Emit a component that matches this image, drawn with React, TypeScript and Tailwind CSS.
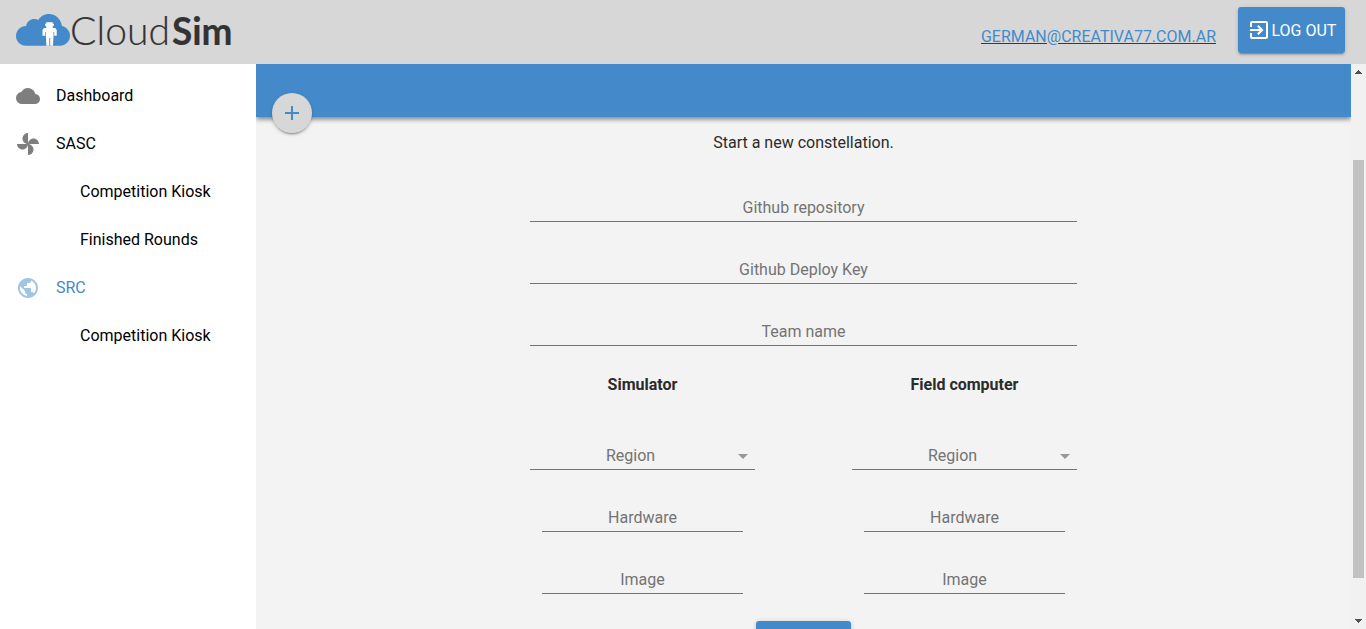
import type { ReactNode } from "react";
import { MdArrowDropDown, MdCloud, MdExitToApp, MdPublic } from "react-icons/md";

function Logo() {
  return (
    <svg width="250" height="64" viewBox="0 0 250 64" className="block shrink-0 overflow-visible">
      <path
        fill="#448aca"
        d="M26 45.7C20.500 45.700 16 41.500 16 36C16 30.500 20.300 26.200 26 26C27 21.500 30.500 19 34.500 19Q36.600 19 38.300 19.900C40.600 16.300 44.400 14 48.700 14C55.300 14 60.800 18.600 62 26C66.500 27.200 70 31 70 35.700C70 41.300 65.500 45.700 60 45.700Z"
      />
      <path
        fill="#fff"
        d="M46.200 22.300H52.800V23.800H54V25.800H52.800V28H55.300L56.700 30V35.800H54.200V32H53.500V36L53 45.700H50.200V38H49.300V45.700H46.400L45.900 36V32H45.200V35.800H42.500V30L44 28H46.200V25.800H45V23.800H46.200Z"
      />
      <text
        x="70"
        y="44.600"
        textLength="100"
        fill="#333333"
        stroke="#333333"
        strokeWidth="0.200"
        className="font-['Lato',sans-serif] text-[39px] font-light"
      >
        Cloud
      </text>
      <text
        x="172"
        y="44.600"
        textLength="60.500"
        lengthAdjust="spacingAndGlyphs"
        fill="#333333"
        stroke="#333333"
        strokeWidth="0.200"
        className="font-['Lato',sans-serif] text-[39px] font-bold"
      >
        Sim
      </text>
    </svg>
  );
}

function PinwheelIcon() {
  return (
    <svg width="24" height="24" viewBox="0 0 24 24" fill="currentColor">
      <path d="M12 12c0-3 2.500-5.500 5.500-5.500S23 9 23 12H12zm0 0c0 3-2.500 5.500-5.500 5.500S1 15 1 12h11zm0 0c-3 0-5.500-2.500-5.500-5.500S9 1 12 1v11zm0 0c3 0 5.500 2.500 5.500 5.500S15 23 12 23V12z" />
    </svg>
  );
}

function NavItem({ icon, active, children }: { icon?: ReactNode; active?: boolean; children: ReactNode }) {
  return (
    <a className={`flex h-12 items-center px-4 ${active ? "text-[#448aca]" : "text-black"}`}>
      {icon ? <span className="w-10 opacity-50">{icon}</span> : <span className="w-16" />}
      <span>{children}</span>
    </a>
  );
}

function Field({ label, select }: { label: string; select?: boolean }) {
  return (
    <div className="flex h-[62px] flex-col justify-end">
      <div className="flex h-[26px] items-start border-b border-[#737373] text-[#737373]">
        <span className="h-6 flex-1 text-center leading-6">{label}</span>
        {select && <MdArrowDropDown className="size-6 text-[#989898]" />}
      </div>
    </div>
  );
}

function Machine({ title }: { title: string }) {
  return (
    <section className="w-[225px]">
      <h2 className="mt-[27px] h-6 text-center font-bold leading-6">{title}</h2>
      <div className="pt-[11px]">
        <Field label="Region" select />
      </div>
      <div className="px-3">
        <Field label="Hardware" />
        <Field label="Image" />
      </div>
    </section>
  );
}

function ScrollBar() {
  return (
    <div className="flex w-[15px] shrink-0 flex-col items-center bg-[#f1f1f1]">
      <svg width="15" height="15" shapeRendering="crispEdges">
        <path fill="#505050" d="M7 6h1v1h1v1h1v1h1v1H4V9h1V8h1V7h1z" />
      </svg>
      <div className="mt-[81px] h-[418px] w-[11px] bg-[#c1c1c1]" />
      <svg width="15" height="15" className="mt-auto" shapeRendering="crispEdges">
        <path fill="#505050" d="M4 5h7v1h-1v1H9v1H8v1H7V8H6V7H5V6H4z" />
      </svg>
    </div>
  );
}

export default function App() {
  return (
    <div className="flex h-[629px] w-[1366px] flex-col overflow-hidden bg-white font-['Roboto',sans-serif] text-base text-[#2b2b2b]">
      <header className="flex h-16 shrink-0 justify-between bg-[#d7d7d7]">
        <Logo />
        <div className="flex items-start pr-[21px]">
          <a className="mr-[22px] mt-[25px] leading-6 text-[#448aca] underline decoration-[#551a8b]">
            GERMAN@CREATIVA77.COM.AR
          </a>
          <button className="mt-[7px] flex h-[46px] w-[107px] items-center rounded-[3px] bg-[#448aca] pl-[9px] text-white shadow-[0_2px_2px_0_rgba(0,0,0,0.14),0_1px_5px_0_rgba(0,0,0,0.12),0_3px_1px_-2px_rgba(0,0,0,0.2)]">
            <MdExitToApp className="size-6 shrink-0" />
            <span className="ml-[0.4px] mt-0.5 whitespace-nowrap">LOG OUT</span>
          </button>
        </div>
      </header>

      <div className="flex min-h-0 flex-1">
        <nav className="w-64 shrink-0 pt-2">
          <NavItem icon={<MdCloud className="size-6" />}>Dashboard</NavItem>
          <NavItem icon={<PinwheelIcon />}>SASC</NavItem>
          <NavItem>Competition Kiosk</NavItem>
          <NavItem>Finished Rounds</NavItem>
          <NavItem icon={<MdPublic className="size-6" />} active>SRC</NavItem>
          <NavItem>Competition Kiosk</NavItem>
        </nav>

        <main className="min-w-0 flex-1 overflow-hidden bg-[#f3f3f3]">
          <div className="relative h-[53px] bg-[#448aca] shadow-[0_2px_5px_rgba(0,0,0,0.5)]">
            <button className="absolute left-4 top-[29px] flex size-10 items-center justify-center rounded-full bg-[#d7d7d7] text-[#448aca] shadow-[0_2px_2px_0_rgba(0,0,0,0.14),0_1px_5px_0_rgba(0,0,0,0.12),0_3px_1px_-2px_rgba(0,0,0,0.2)]">
              <svg width="24" height="24" viewBox="0 0 24 24" fill="currentColor">
                <path d="M19 13h-6v6h-2v-6H5v-2h6V5h2v6h6z" />
              </svg>
            </button>
          </div>
          <div className="mx-auto flex w-[547px] flex-col items-center pt-[14px]">
            <p className="h-6 leading-6">Start a new constellation.</p>
            <div className="mt-[5px] w-full">
              <Field label="Github repository" />
              <Field label="Github Deploy Key" />
              <Field label="Team name" />
            </div>
            <div className="flex w-full justify-between">
              <Machine title="Simulator" />
              <Machine title="Field computer" />
            </div>
            <button className="mt-[27px] h-[46px] w-[95px] shrink-0 rounded-[3px] bg-[#448aca] shadow-[0_1px_5px_rgba(0,0,0,0.2)]" />
          </div>
        </main>
        <ScrollBar />
      </div>
    </div>
  );
}
